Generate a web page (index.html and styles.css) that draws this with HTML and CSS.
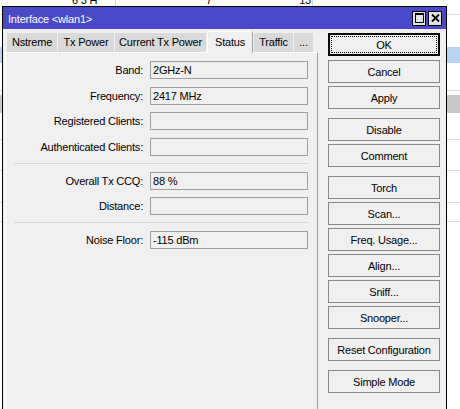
FILE: index.html
```html
<!DOCTYPE html>
<html>
<head>
<meta charset="utf-8">
<title>Interface wlan1</title>
<link rel="stylesheet" href="styles.css">
</head>
<body>
<div class="desk">
  <div class="bg-table">
    <div class="bgrow r0">
      <div class="cell c1"><span>6 3 H</span></div>
      <div class="cell c2"><span>7</span></div>
      <div class="cell c3"><span>13</span></div>
    </div>
    <div class="bgrow r1"></div>
    <div class="bgrow r2"></div>
    <div class="bgrow sel"></div>
    <div class="bgrow r3"></div>
    <div class="bgrow r4"></div>
    <div class="bgrow gray"></div>
    <div class="bgrow r5"></div>
    <div class="bgrow r6"></div>
    <div class="bgrow r7"></div>
    <div class="bgrow r8"></div>
  </div>

  <div class="window">
    <div class="titlebar">
      <span class="title">Interface &lt;wlan1&gt;</span>
      <div class="wbtns">
        <button class="wbtn" aria-label="Maximize">
          <svg width="9" height="10" viewBox="0 0 9 10"><rect x="0.5" y="0.5" width="8" height="9" fill="none" stroke="#000"/><rect x="0" y="0" width="9" height="2" fill="#000"/></svg>
        </button>
        <button class="wbtn" aria-label="Close">
          <svg width="9" height="8" viewBox="0 0 9 8"><path d="M1 0.5 L8 7.5 M8 0.5 L1 7.5" stroke="#000" stroke-width="1.8" fill="none"/></svg>
        </button>
      </div>
    </div>
    <div class="wbody">
      <div class="left">
        <div class="tabs">
          <div class="tab">Nstreme</div>
          <div class="tab">Tx Power</div>
          <div class="tab">Current Tx Power</div>
          <div class="tab active">Status</div>
          <div class="tab">Traffic</div>
          <div class="tab">...</div>
        </div>
        <div class="panel">
          <div class="form">
            <div class="field"><span class="lbl">Band:</span><span class="val">2GHz-N</span></div>
            <div class="field g8"><span class="lbl">Frequency:</span><span class="val">2417 MHz</span></div>
            <div class="field"><span class="lbl">Registered Clients:</span><span class="val"></span></div>
            <div class="field g8"><span class="lbl">Authenticated Clients:</span><span class="val"></span></div>
            <div class="sep"></div>
            <div class="field g8"><span class="lbl">Overall Tx CCQ:</span><span class="val">88 %</span></div>
            <div class="field"><span class="lbl">Distance:</span><span class="val"></span></div>
            <div class="sep"></div>
            <div class="field g8"><span class="lbl">Noise Floor:</span><span class="val">-115 dBm</span></div>
          </div>
        </div>
      </div>
      <div class="actions">
        <button class="btn ok">OK</button>
        <button class="btn cancel">Cancel</button>
        <button class="btn">Apply</button>
        <button class="btn grp">Disable</button>
        <button class="btn">Comment</button>
        <button class="btn grp">Torch</button>
        <button class="btn">Scan...</button>
        <button class="btn">Freq. Usage...</button>
        <button class="btn">Align...</button>
        <button class="btn">Sniff...</button>
        <button class="btn">Snooper...</button>
        <button class="btn grp">Reset Configuration</button>
        <button class="btn grp">Simple Mode</button>
      </div>
    </div>
  </div>
</div>
</body>
</html>
```
FILE: styles.css
```css
* { box-sizing: border-box; }
html, body {
  margin: 0;
  width: 460px;
  height: 409px;
  overflow: hidden;
  background: #fff;
  font-family: "Liberation Sans", Arial, sans-serif;
  font-size: 11px;
  letter-spacing: -0.2px;
  color: #000;
}
.desk { position: relative; width: 460px; height: 409px; }

/* background table (partly hidden behind the window) */
.bg-table { width: 460px; }
.bgrow { width: 460px; }
.r0 { height: 6px; display: flex; overflow: hidden; }
.cell { height: 6px; display: flex; align-items: flex-end; overflow: visible; }
.cell span { line-height: 11px; display: block; }
.c1 { width: 116px; padding-left: 72px; border-right: 1px solid #d6d6d6; }
.c2 { width: 100px; justify-content: flex-end; padding-right: 4px; }
.c3 { width: 97px; justify-content: flex-end; padding-right: 1px; border-right: 1px solid #d6d6d6; }
.r1 { height: 9px; border-bottom: 1px solid #dcdcdc; }
.r2 { height: 32px; }
.sel { height: 16px; background: #b9d3f2; }
.r3 { height: 28px; border-bottom: 1px solid #dcdcdc; }
.r4 { height: 4px; }
.gray { height: 18px; background: #c8c8c8; }
.r5 { height: 27px; border-bottom: 1px solid #dcdcdc; }
.r6 { height: 31px; border-bottom: 1px solid #dcdcdc; }
.r7 { height: 32px; border-bottom: 1px solid #dcdcdc; }
.r8 { height: 19px; border-bottom: 1px solid #dcdcdc; }

/* window */
.window {
  position: absolute;
  left: 2px;
  top: 6px;
  width: 445px;
  height: 420px;
  border: 1px solid #000;
  background: #f0f0f0;
  display: flex;
  flex-direction: column;
}
.titlebar {
  height: 22px;
  flex: none;
  background: #4a4ac8;
  color: #fff;
  display: flex;
  align-items: center;
  justify-content: space-between;
  padding: 0 4px 0 5px;
}
.title { padding-top: 2px; }
.wbtns { display: flex; gap: 2px; }
.wbtn {
  width: 14px;
  height: 15px;
  padding: 0;
  border: 1px solid #000;
  background: #e4e4e4;
  display: flex;
  align-items: center;
  justify-content: center;
}
.wbtn svg { display: block; }

.wbody { flex: 1; display: flex; }
.left {
  width: 315px;
  padding: 2px 0 0 2px;
  display: flex;
  flex-direction: column;
}
.tabs {
  display: flex;
  gap: 1px;
  height: 22px;
  padding-left: 2px;
  margin-bottom: -1px;
  position: relative;
  z-index: 1;
}
.tab {
  height: 19px;
  margin-top: 2px;
  background: #d9d9d9;
  text-align: center;
  line-height: 19px;
  white-space: nowrap;
}
.tab:nth-child(1) { width: 50px; }
.tab:nth-child(2) { width: 56px; }
.tab:nth-child(3) { width: 91px; }
.tab:nth-child(4) { width: 46px; }
.tab:nth-child(5) { width: 39px; }
.tab:nth-child(6) { width: 19px; }
.tab.active {
  height: 22px;
  margin-top: 0;
  background: #f0f0f0;
  border-top: 1px solid #fff;
  border-left: 1px solid #fff;
  border-right: 1px solid #a0a0a0;
  line-height: 20px;
}
.panel {
  flex: 1;
  background: #f0f0f0;
  border-top: 1px solid #fff;
  border-left: 1px solid #fff;
  border-right: 1px solid #a0a0a0;
}
.form {
  display: flex;
  flex-direction: column;
  padding-top: 8px;
}
.field {
  display: flex;
  align-items: center;
  height: 18px;
  margin-top: 7px;
}
.field:first-child { margin-top: 0; }
.field.g8 { margin-top: 8px; }
.lbl {
  width: 137px;
  text-align: right;
  white-space: nowrap;
}
.val {
  margin-left: 7px;
  width: 158px;
  height: 18px;
  border: 1px solid #a0a0a0;
  background: #f0f0f0;
  padding-left: 2px;
  line-height: 16px;
}
.sep {
  height: 1px;
  margin: 7px 0 0 8px;
  width: 294px;
  background: #d8d8d8;
}

/* action buttons */
.actions {
  margin-left: 10px;
  width: 112px;
  padding-top: 4px;
  display: flex;
  flex-direction: column;
}
.btn {
  height: 23px;
  margin: 3px 0 0;
  padding: 0;
  border: 1px solid #888;
  background: #f0f0f0;
  font: inherit;
  letter-spacing: inherit;
  color: #000;
  text-align: center;
}
.btn.ok {
  margin-top: 0;
  border: 2px solid #000;
  outline: 1px dotted #000;
  outline-offset: -4px;
}
.btn.cancel { margin-top: 4px; }
.btn.grp { margin-top: 9px; }
```
